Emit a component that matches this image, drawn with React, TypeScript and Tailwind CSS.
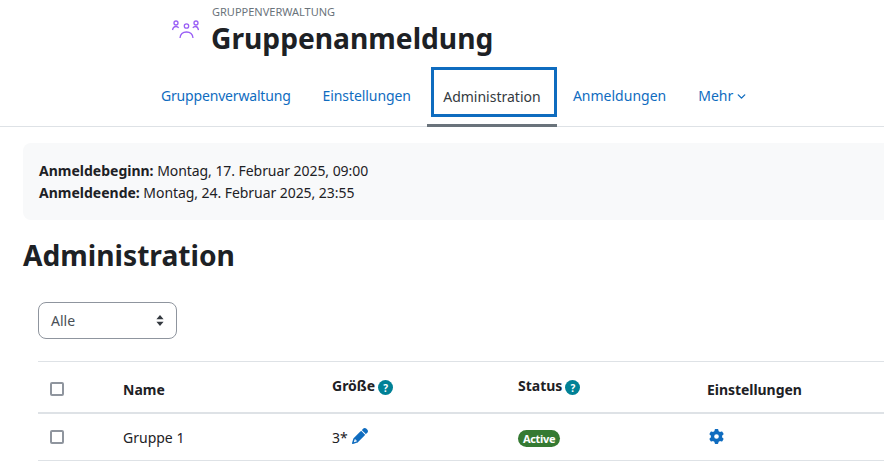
import React from 'react';
import { ChevronDown } from 'lucide-react';

const font = "font-['Noto_Sans','Open_Sans',sans-serif]";

const HelpIcon = () => (
  <span className="ml-[3px] inline-flex h-[15px] w-[15px] items-center justify-center rounded-full bg-[#008196] text-[10px] font-bold leading-none text-white">
    ?
  </span>
);

const Checkbox = () => (
  <span className="block h-[14px] w-[14px] rounded-[2px] border-2 border-[#8f959e] bg-white" />
);

const GroupIcon = () => (
  <svg width="28" height="22" viewBox="0 0 28 22" fill="none" stroke="#9a5ff5" strokeWidth="1.3">
    <circle cx="5" cy="6" r="2" />
    <circle cx="15.500" cy="9" r="2.200" />
    <circle cx="25" cy="6" r="2" />
    <path d="M1.500 13c.5-2.500 2-3.500 3.500-3.500 1.200 0 2 .5 2.700 1.300" />
    <path d="M27.500 13c-.5-2.500-1.500-3.500-3-3.500-1.200 0-2 .5-2.700 1.300" />
    <path d="M9 21c.4-3.800 3-6 6.500-6s6.100 2.200 6.500 6" />
  </svg>
);

const Pencil = () => (
  <svg width="16" height="16" viewBox="0 0 512 512" fill="#0f6cbf">
    <path d="M410.300 231l11.300-11.300-33.900-33.900-62.100-62.100-33.900-33.900-11.300 11.300-22.600 22.600L58.600 322.900c-10.400 10.400-18 23.300-22.200 37.400L1 480.700c-2.500 8.400-.2 17.500 6.100 23.700s15.300 8.500 23.700 6.100l120.300-35.400c14.100-4.200 27-11.800 37.400-22.200L387.700 253.700 410.300 231zM160 399.400l-9.100 22.700c-4 3.100-8.500 5.400-13.300 6.900L59.400 452l23-78.100c1.400-4.900 3.800-9.400 6.900-13.300l22.700-9.100v32c0 8.800 7.200 16 16 16h32zM362.700 18.700L348.300 33.200 325.700 55.800 314.300 67.100l33.900 33.900 62.100 62.100 33.900 33.900 11.300-11.300 22.600-22.600 14.500-14.500c25-25 25-65.500 0-90.500L453.300 18.700c-25-25-65.500-25-90.500 0z" />
  </svg>
);

const Gear = () => (
  <svg width="15" height="15" viewBox="0 0 512 512" fill="#0f6cbf">
    <path d="M495.900 166.600c3.200 8.700 .5 18.400-6.400 24.600l-43.300 39.400c1.100 8.300 1.700 16.800 1.700 25.400s-.6 17.100-1.700 25.400l43.300 39.400c6.900 6.200 9.600 15.900 6.400 24.600c-4.400 11.900-9.700 23.300-15.800 34.300l-4.700 8.100c-6.600 11-14 21.400-22.100 31.200c-5.900 7.200-15.700 9.600-24.500 6.800l-55.700-17.700c-13.400 10.300-28.200 18.900-44 25.400l-12.500 57.100c-2 9.100-9 16.300-18.200 17.800c-13.800 2.300-28 3.500-42.500 3.500s-28.700-1.200-42.500-3.500c-9.200-1.500-16.200-8.700-18.200-17.800l-12.500-57.100c-15.800-6.500-30.600-15.100-44-25.400L83.100 425.900c-8.800 2.800-18.600 .3-24.500-6.800c-8.100-9.800-15.500-20.200-22.100-31.200l-4.700-8.100c-6.100-11-11.400-22.400-15.800-34.300c-3.200-8.700-.5-18.400 6.400-24.600l43.300-39.400C64.600 273.100 64 264.600 64 256s.6-17.100 1.700-25.400L22.400 191.200c-6.900-6.200-9.600-15.900-6.400-24.600c4.400-11.900 9.700-23.300 15.800-34.300l4.700-8.100c6.600-11 14-21.400 22.100-31.200c5.900-7.200 15.700-9.600 24.500-6.800l55.700 17.700c13.400-10.300 28.200-18.900 44-25.400l12.500-57.100c2-9.100 9-16.300 18.200-17.800C227.300 1.200 241.500 0 256 0s28.700 1.200 42.500 3.500c9.200 1.500 16.200 8.700 18.200 17.800l12.500 57.100c15.800 6.500 30.600 15.100 44 25.400l55.700-17.700c8.800-2.800 18.600-.3 24.500 6.800c8.100 9.800 15.500 20.200 22.100 31.200l4.700 8.100c6.100 11 11.400 22.400 15.800 34.300zM256 336a80 80 0 1 0 0-160 80 80 0 1 0 0 160z" />
  </svg>
);

const SortArrows = () => (
  <svg width="8" height="11" viewBox="0 0 8 11" fill="#343a40">
    <path d="M4 0l3.600 4.200H.4zM4 11L.4 6.800h7.200z" />
  </svg>
);

export default function App() {
  return (
    <div className={`${font} h-[464px] w-[884px] overflow-hidden bg-white text-[14px] text-[#1d2125]`}>
      {/* heading */}
      <div className="flex h-[67px] pl-[171px]">
        <div className="mt-[17px]">
          <GroupIcon />
        </div>
        <div className="ml-[13px] pt-[3px]">
          <div className="text-[11px] leading-[17px] text-[#6a737b]">GRUPPENVERWALTUNG</div>
          <div className="-ml-px text-[28.2px] font-bold leading-[36px]">Gruppenanmeldung</div>
        </div>
      </div>

      {/* tabs */}
      <div className="flex h-[60px] items-start border-b border-[#dee2e6] text-[#0f6cbf]">
        <span className="ml-[161px] mt-[19px] leading-[19px] tracking-[-0.18px]">Gruppenverwaltung</span>
        <span className="ml-[32px] mt-[19px] leading-[19px] tracking-[-0.08px]">Einstellungen</span>
        <div className="ml-[16px] h-[60px] w-[130px] border-b-[3px] border-[#6a737b]">
          <div className="ml-[4px] flex h-[50px] w-[126px] items-center justify-center border-[3px] border-[#0f6cbf] pr-[4px] pt-[8px] text-[#343a40]">
            Administration
          </div>
        </div>
        <span className="ml-[16px] mt-[19px] leading-[19px]">Anmeldungen</span>
        <span className="ml-[32px] mt-[19px] flex items-center leading-[19px]">
          Mehr
          <ChevronDown size={13} strokeWidth={2.5} className="ml-[2px] mt-[1px]" />
        </span>
      </div>

      {/* dates */}
      <div className="ml-[23px] mt-[16px] h-[77px] rounded-l-[8px] bg-[#f8f9fa] pl-[16px] pt-[17px] leading-[22px]">
        <div className="tracking-[-0.06px]">
          <b className="tracking-normal">Anmeldebeginn:</b> Montag, 17. Februar 2025, 09:00
        </div>
        <div className="tracking-[-0.06px]">
          <b className="tracking-normal">Anmeldeende:</b> Montag, 24. Februar 2025, 23:55
        </div>
      </div>

      <h2 className="ml-[23px] mt-[15px] text-[28.2px] font-bold leading-[40px]">Administration</h2>

      {/* filter */}
      <div className="ml-[38px] mt-[27px] flex h-[37px] w-[139px] items-center justify-between rounded-[8px] border border-[#8f959e] pl-[12px] pr-[12px] text-[#495057]">
        Alle
        <SortArrows />
      </div>

      {/* table */}
      <div className="ml-[38px] mt-[22px] border-t border-[#dee2e6]">
        <div className="grid h-[52px] grid-cols-[85px_209px_186px_189px_1fr] border-b-2 border-[#dee2e6] font-bold">
          <div className="flex items-center pl-[12px] pt-[4px]">
            <Checkbox />
          </div>
          <div className="flex items-center pt-[4px]">Name</div>
          <div className="flex items-start pt-[14px] leading-[19px]">
            Größe
            <span className="mt-[4px] flex">
              <HelpIcon />
            </span>
          </div>
          <div className="flex items-start pt-[14px] leading-[19px]">
            Status
            <span className="mt-[4px] flex">
              <HelpIcon />
            </span>
          </div>
          <div className="flex items-center pt-[4px] tracking-[-0.05px]">Einstellungen</div>
        </div>
        <div className="grid h-[47px] grid-cols-[85px_209px_186px_189px_1fr] items-center border-b border-[#dee2e6]">
          <div className="pl-[12px]">
            <Checkbox />
          </div>
          <div>Gruppe 1</div>
          <div className="flex items-center gap-[4px]">
            3*
            <span className="-mt-[2px]">
              <Pencil />
            </span>
          </div>
          <div>
            <span className="inline-flex h-[17px] items-center rounded-full bg-[#357a32] px-[5px] text-[11px] font-bold tracking-[-0.35px] text-white">
              Active
            </span>
          </div>
          <div className="-mt-[2px] pl-[2px]">
            <Gear />
          </div>
        </div>
      </div>
    </div>
  );
}
